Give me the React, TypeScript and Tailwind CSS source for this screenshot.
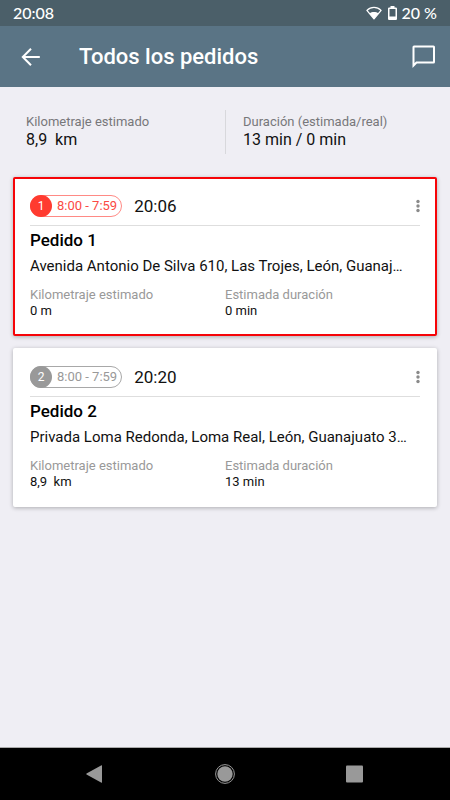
import React from 'react';

type Order = {
  id: number;
  window: string;
  arrival: string;
  title: string;
  address: string;
  distance: string;
  duration: string;
  late: boolean;
};

const orders: Order[] = [
  {
    id: 1,
    window: '8:00 - 7:59',
    arrival: '20:06',
    title: 'Pedido 1',
    address: 'Avenida Antonio De Silva 610, Las Trojes, León, Guanaj…',
    distance: '0 m',
    duration: '0 min',
    late: true,
  },
  {
    id: 2,
    window: '8:00 - 7:59',
    arrival: '20:20',
    title: 'Pedido 2',
    address: 'Privada Loma Redonda, Loma Real, León, Guanajuato 3…',
    distance: '8,9\u00a0 km',
    duration: '13 min',
    late: false,
  },
];

function StatusBar() {
  return (
    <div className="flex h-[26px] items-center justify-between bg-[#4b5f69] px-[13px] font-['Lato',sans-serif] text-[16px] leading-5 font-medium text-white">
      <span>20:08</span>
      <div className="flex items-center">
        <svg className="mr-[6px] h-[14px] w-4" viewBox="0 0 16 14" aria-hidden="true">
          <path d="M0.9 4.4C5 0.3 11 0.3 15.1 4.4L8 12.9Z" fill="none" stroke="#fff" strokeWidth="1.3" strokeLinejoin="round" />
          <path d="M3.6 7.3C6 5.5 10 5.5 12.4 7.3L8 12.9Z" fill="#fff" />
        </svg>
        <svg className="mr-[5px] h-[14px] w-[9px]" viewBox="0 0 9 14" aria-hidden="true">
          <path d="M2.5 0h4v1.4h1.4q1.1 0 1.1 1.1v10.4q0 1.1-1.1 1.1H1.1Q0 14 0 12.9V2.5Q0 1.4 1.1 1.4H2.5ZM1.5 3V10.5H7.5V3Z" fill="#fff" fillRule="evenodd" />
        </svg>
        <span>20 %</span>
      </div>
    </div>
  );
}

function Header() {
  return (
    <header className="flex h-[61px] items-center bg-[#5a7485] pr-[14px] pl-[19px] text-white">
      <button type="button" aria-label="Atrás" className="mr-9">
        <svg className="size-6" viewBox="0 0 24 24" fill="none" stroke="currentColor" strokeWidth="2">
          <path d="M20.8 12H4.5M12 3.7L3.8 12L12 20.3" />
        </svg>
      </button>
      <h1 className="flex-1 text-[22px] leading-7 font-medium">Todos los pedidos</h1>
      <button type="button" aria-label="Mensajes">
        <svg className="size-6" viewBox="0 0 24 24" fill="none" stroke="currentColor" strokeWidth="2">
          <path d="M1.5 20.5V2Q1.5 1.5 2 1.5H21.5Q22 1.5 22 2V17Q22 17.5 21.5 17.5H4.5Z" />
        </svg>
      </button>
    </header>
  );
}

function Summary() {
  return (
    <section className="grid grid-cols-2 pt-[23px] pb-[23px]">
      <div className="pt-1 pl-[26px]">
        <div className="text-[13px] leading-4 text-[#77777a]">Kilometraje estimado</div>
        <div className="text-[16px] leading-5 text-[#111]">8,9&nbsp; km</div>
      </div>
      <div className="h-11 border-l border-[#d8d8dc] pt-1 pl-[17px]">
        <div className="text-[13px] leading-4 text-[#77777a]">Duración (estimada/real)</div>
        <div className="text-[16px] leading-5 text-[#111]">13 min / 0 min</div>
      </div>
    </section>
  );
}

function OrderCard({ order }: { order: Order }) {
  const card = order.late ? 'border-[#f60408]' : 'border-white';
  const chip = order.late ? 'border-[#ff8a85] text-[#fb4a44]' : 'border-[#a8a8a8] text-[#999]';
  const badge = order.late ? 'bg-[#ff3b30]' : 'bg-[#999]';

  return (
    <article className={`rounded-[2px] border-2 bg-white px-[15px] pt-[15px] pb-[15px] shadow-[0_1px_4px_rgba(0,0,0,0.28)] ${card}`}>
      <div className="flex items-center border-b border-[#dedede] pb-[7px]">
        <div className={`flex h-[22px] items-center rounded-full border pr-1 text-[13px] leading-5 ${chip}`}>
          <span className={`-ml-px mr-[5px] flex size-[22px] items-center justify-center rounded-full text-[12px] text-white ${badge}`}>{order.id}</span>
          {order.window}
        </div>
        <span className="ml-3 flex-1 text-[17px] leading-6">{order.arrival}</span>
        <button type="button" aria-label={`Opciones de ${order.title}`}>
          <svg className="h-[14px] w-1" viewBox="0 0 4 14" fill="#8a8a8a">
            <circle cx="2" cy="2.5" r="1.7" />
            <circle cx="2" cy="7" r="1.7" />
            <circle cx="2" cy="11.5" r="1.7" />
          </svg>
        </button>
      </div>
      <h2 className="pt-[2px] text-[17px] leading-6 font-medium text-black">{order.title}</h2>
      <p className="truncate pt-[2px] text-[15px] leading-6">{order.address}</p>
      <div className="grid grid-cols-2 pt-[9px]">
        <div>
          <div className="text-[13px] leading-4 text-[#999]">Kilometraje estimado</div>
          <div className="text-[13px] leading-4">{order.distance}</div>
        </div>
        <div>
          <div className="text-[13px] leading-4 text-[#999]">Estimada duración</div>
          <div className="text-[13px] leading-4">{order.duration}</div>
        </div>
      </div>
    </article>
  );
}

function NavBar() {
  return (
    <nav className="flex h-[53px] items-center justify-around border-t border-[#aaa] bg-black px-[30px] text-[#999]">
      <button type="button" aria-label="Volver">
        <svg className="size-5" viewBox="0 0 20 20" fill="currentColor">
          <path d="M16.5 1.3Q17 1 17 1.7V18.3Q17 19 16.5 18.7L1.5 10.4Q1 10 1.5 9.6Z" />
        </svg>
      </button>
      <button type="button" aria-label="Inicio">
        <svg className="size-5" viewBox="0 0 20 20" fill="currentColor">
          <circle cx="10" cy="10" r="9.4" fill="none" stroke="currentColor" />
          <circle cx="10" cy="10" r="7.7" />
        </svg>
      </button>
      <button type="button" aria-label="Recientes">
        <svg className="size-5" viewBox="0 0 20 20" fill="currentColor">
          <rect x="1" y="1.5" width="17" height="17" rx="1" />
        </svg>
      </button>
    </nav>
  );
}

export default function App() {
  return (
    <div className="flex min-h-screen flex-col bg-[#efeef4] font-['Roboto',sans-serif] text-[#111]">
      <StatusBar />
      <Header />
      <main className="flex-1">
        <Summary />
        <div className="flex flex-col gap-3 px-[13px]">
          {orders.map((order) => (
            <OrderCard key={order.id} order={order} />
          ))}
        </div>
      </main>
      <NavBar />
    </div>
  );
}
